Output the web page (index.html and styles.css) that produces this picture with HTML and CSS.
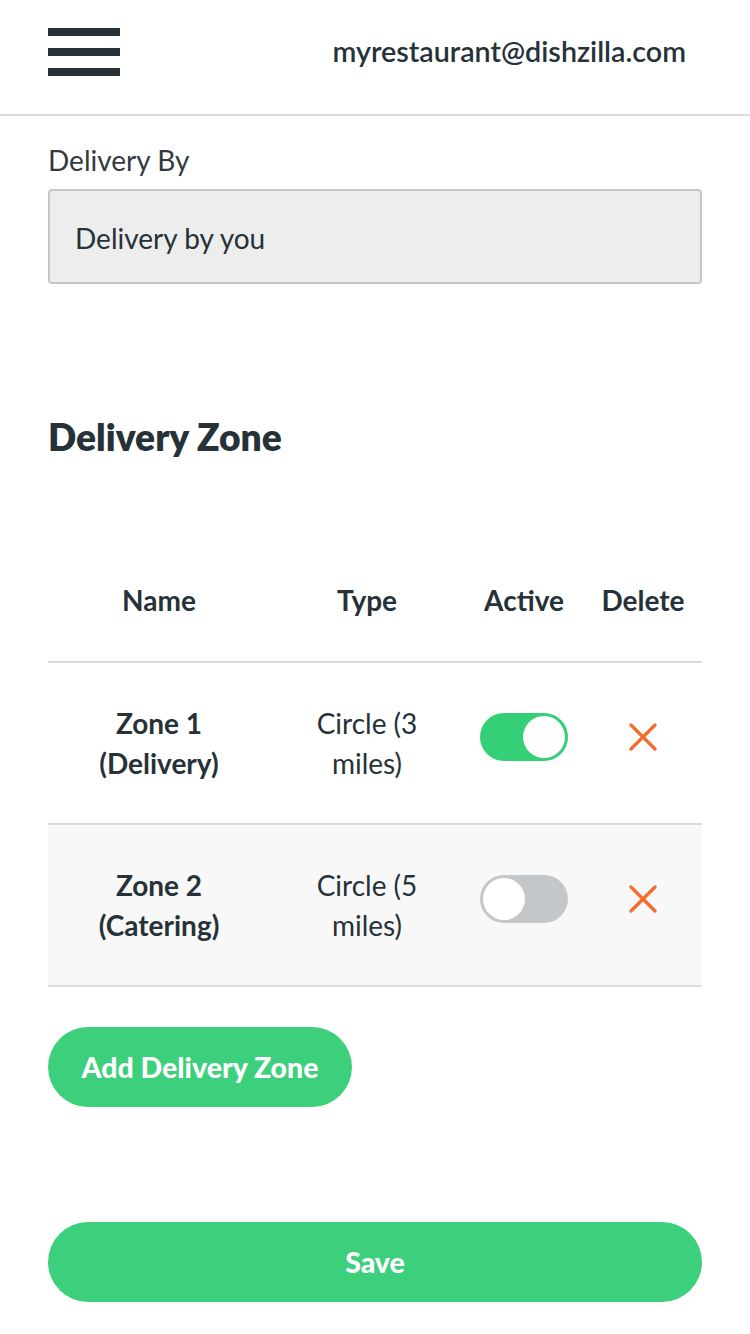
FILE: index.html
```html
<!DOCTYPE html>
<html>
<head>
<meta charset="utf-8">
<link rel="stylesheet" href="styles.css">
</head>
<body>
<header class="topbar">
  <div class="burger"><span></span><span></span><span></span></div>
  <div class="email">myrestaurant@dishzilla.com</div>
</header>
<main class="content">
  <label class="field-label">Delivery By</label>
  <div class="field-input">Delivery by you</div>

  <h2 class="section-title">Delivery Zone</h2>

  <div class="zones">
    <div class="zrow zhead">
      <div class="cell">Name</div>
      <div class="cell">Type</div>
      <div class="cell">Active</div>
      <div class="cell">Delete</div>
    </div>
    <div class="zrow">
      <div class="cell name">Zone 1<br>(Delivery)</div>
      <div class="cell">Circle (3<br>miles)</div>
      <div class="cell"><span class="toggle on"><span class="knob"></span></span></div>
      <div class="cell"><svg class="del" width="28" height="28" viewBox="0 0 28 28"><path d="M2 2 L26 26 M26 2 L2 26" stroke="#f76b2d" stroke-width="3.2" stroke-linecap="round"/></svg></div>
    </div>
    <div class="zrow alt">
      <div class="cell name">Zone 2<br>(Catering)</div>
      <div class="cell">Circle (5<br>miles)</div>
      <div class="cell"><span class="toggle off"><span class="knob"></span></span></div>
      <div class="cell"><svg class="del" width="28" height="28" viewBox="0 0 28 28"><path d="M2 2 L26 26 M26 2 L2 26" stroke="#f76b2d" stroke-width="3.2" stroke-linecap="round"/></svg></div>
    </div>
  </div>

  <button class="btn btn-add">Add Delivery Zone</button>
  <button class="btn btn-save">Save</button>
</main>
</body>
</html>
```
FILE: styles.css
```css
* { box-sizing: border-box; }
html, body { margin: 0; padding: 0; background: #fff; }
body {
  font-family: Lato, "Liberation Sans", sans-serif;
  color: #263238;
  width: 750px;
}
.topbar {
  height: 116px;
  border-bottom: 2px solid #dcdcdc;
  display: flex;
  align-items: flex-start;
  justify-content: space-between;
  padding: 28px 64px 0 48px;
}
.burger {
  width: 72px;
  display: flex;
  flex-direction: column;
  gap: 12px;
}
.burger span {
  display: block;
  height: 8px;
  background: #263238;
}
.email {
  font-size: 28.7px;
  font-weight: 600;
  line-height: 32px;
  margin-top: 7px;
  color: #263238;
}
.content {
  padding: 28px 48px 0 48px;
  display: flex;
  flex-direction: column;
  align-items: flex-start;
}
.field-label {
  font-size: 28px;
  line-height: 32px;
  color: #333a3f;
}
.field-input {
  margin-top: 13px;
  width: 654px;
  height: 95px;
  background: #ededed;
  border: 2px solid #c5c8cb;
  border-radius: 4px;
  display: flex;
  align-items: center;
  padding: 2px 0 0 25px;
  font-size: 28px;
  color: #263238;
}
.section-title {
  margin: 133px 0 0 0;
  font-size: 37.2px;
  line-height: 40px;
  font-weight: 800;
}
.zones {
  margin-top: 84px;
  width: 654px;
}
.zrow {
  display: grid;
  grid-template-columns: 222px 194px 120px 118px;
  height: 162px;
  border-bottom: 2px solid #dcdcdc;
  align-items: center;
  font-size: 28px;
  line-height: 40px;
}
.zrow.zhead {
  height: 122px;
  font-weight: 700;
  padding-bottom: 2px;
}
.zrow.alt { background: #f8f8f8; }
.cell {
  text-align: center;
  display: flex;
  justify-content: center;
  align-items: center;
}
.cell.name { font-weight: 700; }
.toggle {
  display: flex;
  align-items: center;
  width: 88px;
  height: 48px;
  border-radius: 24px;
  padding: 0 3px;
  margin-bottom: 12px;
}
.toggle.on { background: #35cf78; justify-content: flex-end; }
.toggle.off { background: #c4c7ca; justify-content: flex-start; }
.knob {
  width: 42px;
  height: 42px;
  border-radius: 50%;
  background: #fff;
}
.del { display: block; margin-bottom: 12px; }
.btn {
  border: none;
  border-radius: 40px;
  background: #3ccf7c;
  color: #fff;
  font-family: Lato, "Liberation Sans", sans-serif;
  font-weight: 900;
  font-size: 28.5px;
  height: 80px;
  padding: 0;
}
.btn-add {
  margin-top: 40px;
  width: 304px;
}
.btn-save {
  margin-top: 115px;
  width: 654px;
}
```
